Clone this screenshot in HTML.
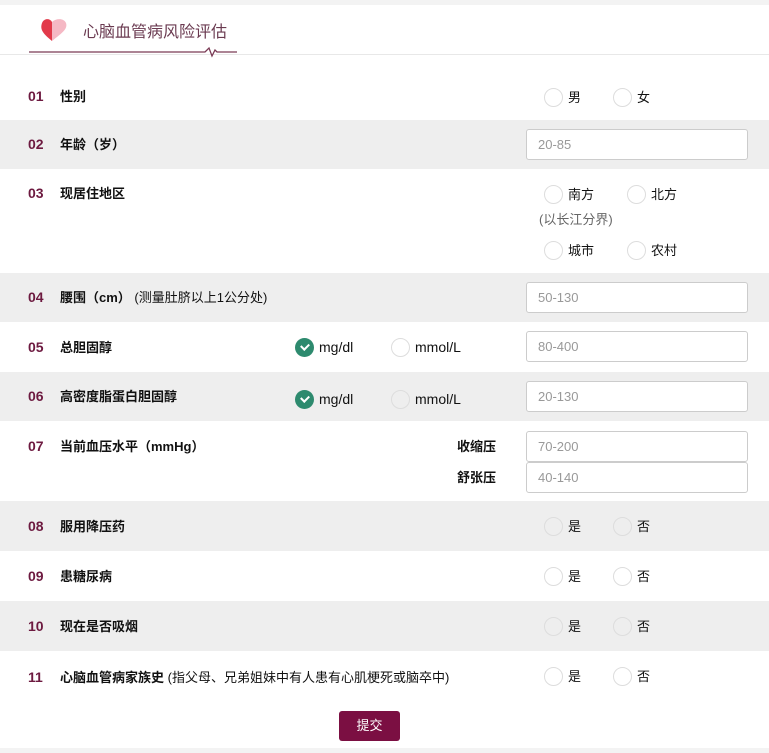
<!DOCTYPE html><html><head><meta charset="utf-8"><style>
*{margin:0;padding:0;box-sizing:border-box}
body{width:769px;height:753px;background:#fff;font-family:"Liberation Sans","Noto Sans CJK SC",sans-serif;font-size:13px;color:#222;position:relative;overflow:hidden}
.a{position:absolute}
.g{background:#eeeeee}
.n{position:absolute;left:28px;font-weight:bold;color:#6d1a40;font-size:14px}
.l{position:absolute;left:60px;font-weight:bold;font-size:13px;color:#111;margin-top:-2px}
.l span{font-weight:normal}
.r{position:absolute;width:19px;height:19px;border-radius:50%;border:1px solid #ddd;background:#fff}
.t{position:absolute;font-size:13px;color:#111;margin-top:-2px}
.in{position:absolute;left:526px;width:222px;height:31px;border:1px solid #ccc;border-radius:3px;background:#fff;color:#999;font-size:13px;padding:7px 11px}
.c{position:absolute;width:19px;height:19px;border-radius:50%;background:#2d8a6e}
.c:after{content:"";position:absolute;left:6px;top:5px;width:6px;height:4px;border-left:2px solid #fff;border-bottom:2px solid #fff;transform:rotate(-45deg)}
.m{margin-top:1px}
</style></head><body>
<div class="a" style="left:0;top:0;width:769px;height:5px;background:#f3f3f3"></div>
<div class="a" style="left:0;top:54px;width:769px;height:1px;background:#e8e8e8"></div>
<svg class="a" style="left:40px;top:17px" width="30" height="26" viewBox="0 0 30 26"><path d="M12 24 C2 16 0 12 2 6 C4 1 10 1 12 5 Z" fill="#e23a4a"/><path d="M12 24 C22 16 28 12 26 6 C24 1 16 1 12 5 Z" fill="#f5b8c4"/></svg>
<div class="a" style="left:83px;top:18px;font-size:16px;color:#6a3a50">心脑血管病风险评估</div>
<svg class="a" style="left:29px;top:46px" width="208" height="12"><path d="M0 6 H176 L180 2 L183 10 L186 4 L188 6 H208" stroke="#7a3a55" stroke-width="1.3" fill="none"/></svg>

<div class="n" style="top:88px">01</div><div class="l" style="top:88px">性别</div>
<div class="r" style="left:544px;top:88px"></div><div class="t" style="left:568px;top:89px">男</div>
<div class="r" style="left:613px;top:88px"></div><div class="t" style="left:637px;top:89px">女</div>

<div class="a g" style="left:0;top:120px;width:769px;height:49px"></div>
<div class="n" style="top:136px">02</div><div class="l" style="top:136px">年龄（岁）</div>
<div class="in" style="top:129px">20-85</div>

<div class="n" style="top:185px">03</div><div class="l" style="top:185px">现居住地区</div>
<div class="r" style="left:544px;top:185px"></div><div class="t" style="left:568px;top:186px">南方</div>
<div class="r" style="left:627px;top:185px"></div><div class="t" style="left:651px;top:186px">北方</div>
<div class="t" style="left:539px;top:211px;color:#666">(以长江分界)</div>
<div class="r" style="left:544px;top:241px"></div><div class="t" style="left:568px;top:242px">城市</div>
<div class="r" style="left:627px;top:241px"></div><div class="t" style="left:651px;top:242px">农村</div>

<div class="a g" style="left:0;top:273px;width:769px;height:49px"></div>
<div class="n" style="top:289px">04</div><div class="l" style="top:289px">腰围（cm） <span>(测量肚脐以上1公分处)</span></div>
<div class="in" style="top:282px">50-130</div>

<div class="n" style="top:339px">05</div><div class="l" style="top:339px">总胆固醇</div>
<div class="c" style="left:295px;top:338px"></div><div class="t m" style="left:319px;top:338px;font-size:14px">mg/dl</div>
<div class="r" style="left:391px;top:338px"></div><div class="t m" style="left:415px;top:338px;font-size:14px">mmol/L</div>
<div class="in" style="top:331px">80-400</div>

<div class="a g" style="left:0;top:372px;width:769px;height:49px"></div>
<div class="n" style="top:388px">06</div><div class="l" style="top:388px">高密度脂蛋白胆固醇</div>
<div class="c" style="left:295px;top:390px"></div><div class="t m" style="left:319px;top:390px;font-size:14px">mg/dl</div>
<div class="r" style="left:391px;top:390px;background:#eee"></div><div class="t m" style="left:415px;top:390px;font-size:14px">mmol/L</div>
<div class="in" style="top:381px">20-130</div>

<div class="n" style="top:438px">07</div><div class="l" style="top:438px">当前血压水平（mmHg）</div>
<div class="t" style="left:457px;top:438px;font-weight:bold">收缩压</div>
<div class="in" style="top:431px">70-200</div>
<div class="t" style="left:457px;top:469px;font-weight:bold">舒张压</div>
<div class="in" style="top:462px">40-140</div>

<div class="a g" style="left:0;top:501px;width:769px;height:50px"></div>
<div class="n" style="top:518px">08</div><div class="l" style="top:518px">服用降压药</div>
<div class="r" style="left:544px;top:517px;background:#eee"></div><div class="t" style="left:568px;top:518px">是</div>
<div class="r" style="left:613px;top:517px;background:#eee"></div><div class="t" style="left:637px;top:518px">否</div>

<div class="n" style="top:568px">09</div><div class="l" style="top:568px">患糖尿病</div>
<div class="r" style="left:544px;top:567px"></div><div class="t" style="left:568px;top:568px">是</div>
<div class="r" style="left:613px;top:567px"></div><div class="t" style="left:637px;top:568px">否</div>

<div class="a g" style="left:0;top:601px;width:769px;height:50px"></div>
<div class="n" style="top:618px">10</div><div class="l" style="top:618px">现在是否吸烟</div>
<div class="r" style="left:544px;top:617px;background:#eee"></div><div class="t" style="left:568px;top:618px">是</div>
<div class="r" style="left:613px;top:617px;background:#eee"></div><div class="t" style="left:637px;top:618px">否</div>

<div class="n" style="top:669px">11</div><div class="l" style="top:669px">心脑血管病家族史 <span>(指父母、兄弟姐妹中有人患有心肌梗死或脑卒中)</span></div>
<div class="r" style="left:544px;top:667px"></div><div class="t" style="left:568px;top:668px">是</div>
<div class="r" style="left:613px;top:667px"></div><div class="t" style="left:637px;top:668px">否</div>

<div class="a" style="left:339px;top:711px;width:61px;height:30px;background:#7b0f42;border-radius:3px;color:#fff;text-align:center;line-height:30px;font-size:13px">提交</div>
<div class="a" style="left:0;top:748px;width:769px;height:5px;background:#f3f3f3"></div>
</body></html>
